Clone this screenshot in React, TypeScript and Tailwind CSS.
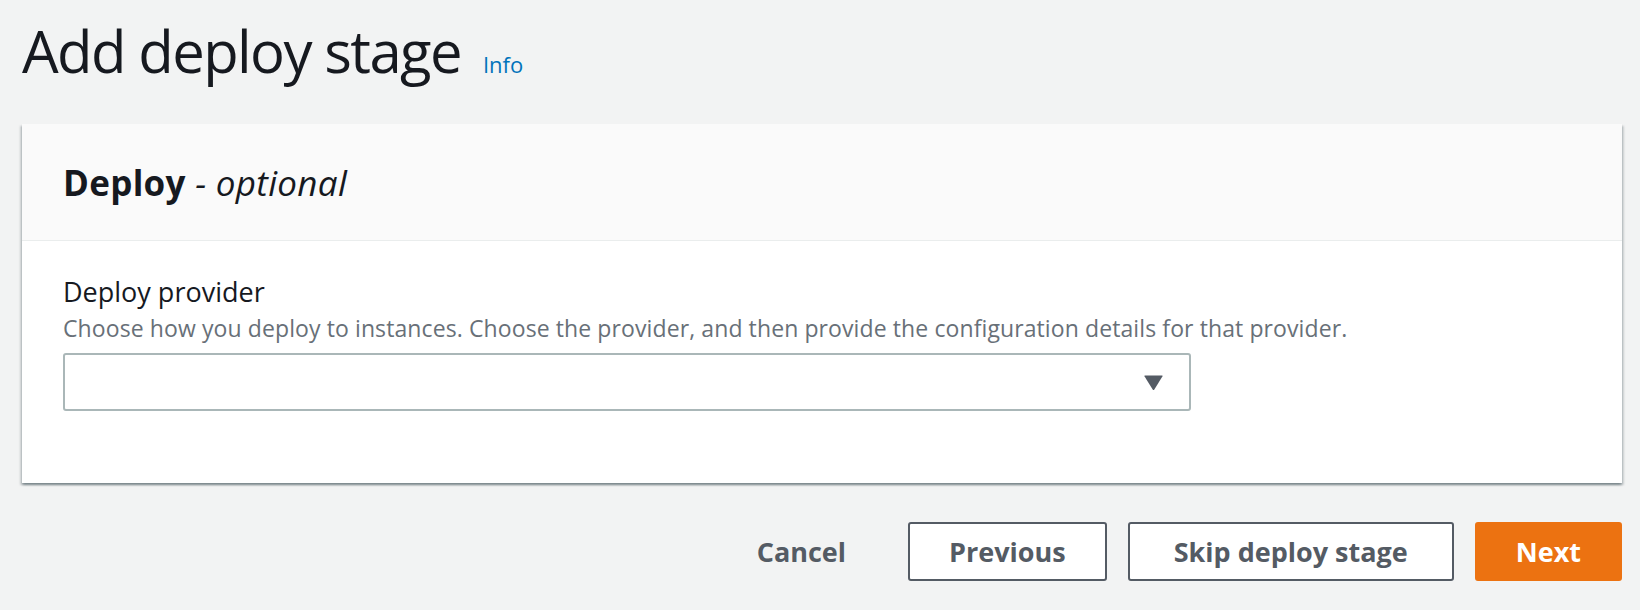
import React from "react";

const font = { fontFamily: '"Open Sans", "Noto Sans", Arial, sans-serif' };

function Button({
  children,
  variant,
  pad = "px-[39px]",
}: {
  children: React.ReactNode;
  variant: "link" | "normal" | "primary";
  pad?: string;
}) {
  const base =
    "h-[59px] rounded-[3px] border-2 text-[27px] font-bold leading-[34px] flex items-center justify-center";
  const styles =
    variant === "primary"
      ? "bg-[#ec7211] border-[#ec7211] text-white"
      : variant === "normal"
      ? "bg-white border-[#545b64] text-[#545b64]"
      : "bg-transparent border-transparent text-[#545b64]";
  return <button className={`${base} ${pad} ${styles}`}>{children}</button>;
}

export default function App() {
  return (
    <div className="min-h-[610px] w-full bg-[#f2f3f3] text-[#16191f]" style={font}>
      <div className="pl-[22px] pr-[18px] pt-[17px]">
        <div className="flex items-baseline gap-[22px]">
          <h1 className="text-[58px] leading-[68px] font-medium tracking-[-1.6px] text-[#16191f]">
            Add deploy stage
          </h1>
          <a className="text-[22px] text-[#0073bb] leading-[30px]">Info</a>
        </div>

        <div className="mt-[39px] bg-white shadow-[0_2px_2px_0_rgba(0,28,36,0.3),2px_2px_2px_0_rgba(0,28,36,0.15),-2px_2px_2px_0_rgba(0,28,36,0.15)]">
          <div className="bg-[#fafafa] border-b border-[#eaeded] pl-[41px] pt-[39px] pb-[37px]">
            <h2 className="text-[35px] leading-[40px] font-bold tracking-[0.3px] text-[#16191f]">
              Deploy <span className="font-normal italic">- optional</span>
            </h2>
          </div>
          <div className="pl-[41px] pt-[35px] pb-[72px]">
            <div className="text-[27px] leading-[32px] text-[#16191f]">Deploy provider</div>
            <div className="mt-[5px] text-[23px] leading-[30px] tracking-[0.1px] text-[#687078]">
              Choose how you deploy to instances. Choose the provider, and then provide the
              configuration details for that provider.
            </div>
            <div className="mt-[10px] w-[1128px] h-[58px] rounded-[3px] border-2 border-[#aab7b8] bg-white flex items-center justify-end pr-[25px]">
              <svg width="21" height="17" viewBox="0 0 21 17">
                <path
                  d="M2 1.5 L19 1.5 Q20 1.5 19.4 2.5 L11.3 15.5 Q10.5 16.6 9.7 15.5 L1.6 2.5 Q1 1.5 2 1.5 Z"
                  fill="#545b64"
                />
              </svg>
            </div>
          </div>
        </div>

        <div className="mt-[39px] flex justify-end gap-[21px]">
          <Button variant="link">Cancel</Button>
          <Button variant="normal">Previous</Button>
          <Button variant="normal" pad="px-[44px]">
            Skip deploy stage
          </Button>
          <Button variant="primary">Next</Button>
        </div>
      </div>
    </div>
  );
}
